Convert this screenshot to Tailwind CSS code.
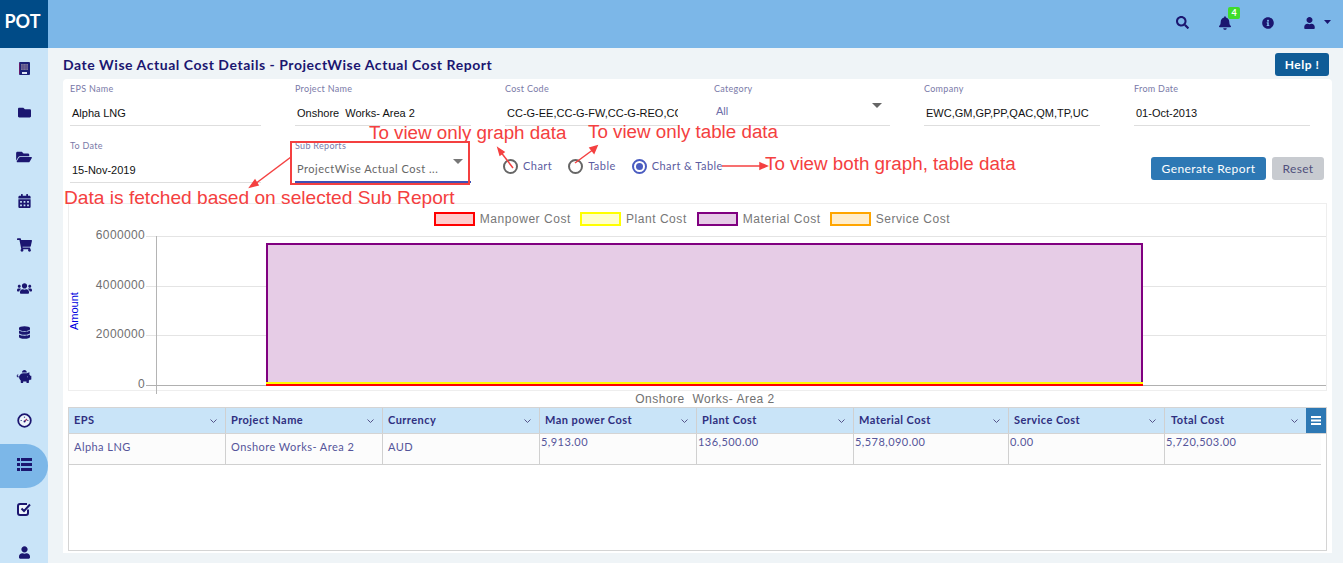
<!DOCTYPE html>
<html lang="en">
<head>
<meta charset="utf-8">
<title>Date Wise Actual Cost Details</title>
<script src="https://cdn.jsdelivr.net/npm/@tailwindcss/browser@4"></script>
</head>
<body class="m-0 overflow-hidden">
<div class="relative flex h-[563px] w-[1343px] overflow-hidden bg-[#eff4f7] font-['Lato',sans-serif]">
  <!-- Sidebar -->
  <aside class="flex h-full w-[48px] shrink-0 flex-col bg-[#c9e4f8] text-[#1b1670]">
    <div class="flex h-[48px] shrink-0 items-center justify-center bg-[#004b87] pb-[5px] pr-[3px] text-[18px] font-bold text-white">POT</div>
    <nav class="flex flex-col">
      <div class="flex h-[44px] items-center justify-center pb-[3px]">
        <svg class="h-[13px] w-[11px]" viewBox="0 0 11 13"><rect width="11" height="13" rx="1" fill="#1b2278"/><path d="M0 1h1v11H0z" fill="#6a1a6a"/><path d="M2 2h7v6H2z" fill="#76769a"/><path d="M2 4h7M2 6h7M4 2v6M7 2v6" stroke="#4a3a80" stroke-width=".6"/><path d="M3 10h5v2H3z" fill="#dfe6f5"/></svg>
      </div>
      <div class="flex h-[44px] items-center justify-center pb-[3px]"><svg class="h-[13px] w-[13px]" viewBox="0 0 512 512" fill="currentColor"><path d="M464 128H272l-64-64H48C21.49 64 0 85.49 0 112v288c0 26.51 21.49 48 48 48h416c26.51 0 48-21.49 48-48V176c0-26.51-21.49-48-48-48z"/></svg></div>
      <div class="flex h-[44px] items-center justify-center pb-[3px]"><svg class="h-[14px] w-[18px]" viewBox="0 0 576 512" fill="currentColor"><path d="M572.694 292.093L500.27 416.248A63.997 63.997 0 0 1 444.989 448H45.025c-18.523 0-30.064-20.093-20.731-36.093l72.424-124.155A64 64 0 0 1 152 256h399.964c18.523 0 30.064 20.093 20.73 36.093zM152 224h328v-48c0-26.51-21.49-48-48-48H272l-64-64H48C21.49 64 0 85.49 0 112v278.046l69.077-118.418C86.214 242.25 117.989 224 152 224z"/></svg></div>
      <div class="flex h-[44px] items-center justify-center pb-[3px]"><svg class="h-[14px] w-[13px]" viewBox="0 0 448 512" fill="currentColor"><path d="M0 464c0 26.5 21.5 48 48 48h352c26.5 0 48-21.5 48-48V192H0v272zm320-196c0-6.6 5.4-12 12-12h40c6.6 0 12 5.4 12 12v40c0 6.6-5.4 12-12 12h-40c-6.6 0-12-5.4-12-12v-40zm0 128c0-6.6 5.4-12 12-12h40c6.6 0 12 5.4 12 12v40c0 6.6-5.4 12-12 12h-40c-6.6 0-12-5.4-12-12v-40zM192 268c0-6.6 5.4-12 12-12h40c6.6 0 12 5.4 12 12v40c0 6.6-5.4 12-12 12h-40c-6.6 0-12-5.4-12-12v-40zm0 128c0-6.6 5.4-12 12-12h40c6.6 0 12 5.4 12 12v40c0 6.6-5.4 12-12 12h-40c-6.6 0-12-5.4-12-12v-40zM64 268c0-6.6 5.4-12 12-12h40c6.6 0 12 5.4 12 12v40c0 6.6-5.4 12-12 12H76c-6.6 0-12-5.4-12-12v-40zm0 128c0-6.6 5.4-12 12-12h40c6.6 0 12 5.4 12 12v40c0 6.6-5.4 12-12 12H76c-6.6 0-12-5.4-12-12v-40zM400 64h-48V16c0-8.8-7.2-16-16-16h-32c-8.8 0-16 7.2-16 16v48H160V16c0-8.8-7.2-16-16-16h-32c-8.8 0-16 7.2-16 16v48H48C21.5 64 0 85.5 0 112v48h448v-48c0-26.5-21.5-48-48-48z"/></svg></div>
      <div class="flex h-[44px] items-center justify-center pb-[3px]"><svg class="h-[14px] w-[15px]" viewBox="0 0 576 512" fill="currentColor"><path d="M528.12 301.319l47.273-208C578.806 78.301 567.391 64 551.99 64H159.208l-9.166-44.81C147.758 8.021 137.93 0 126.529 0H24C10.745 0 0 10.745 0 24v16c0 13.255 10.745 24 24 24h69.883l70.248 343.435C147.325 417.1 136 435.222 136 456c0 30.928 25.072 56 56 56s56-25.072 56-56c0-15.674-6.447-29.835-16.824-40h209.647C430.447 426.165 424 440.326 424 456c0 30.928 25.072 56 56 56s56-25.072 56-56c0-22.172-12.888-41.332-31.579-50.405l5.517-24.276c3.413-15.018-8.002-29.319-23.403-29.319H218.117l-6.545-32h293.145c11.206 0 20.92-7.754 23.403-18.681z"/></svg></div>
      <div class="flex h-[44px] items-center justify-center pb-[3px]"><svg class="h-[13px] w-[15px]" viewBox="0 0 640 512" fill="currentColor"><path d="M96 224c35.3 0 64-28.7 64-64s-28.7-64-64-64-64 28.7-64 64 28.7 64 64 64zm448 0c35.3 0 64-28.7 64-64s-28.7-64-64-64-64 28.7-64 64 28.7 64 64 64zm32 32h-64c-17.6 0-33.5 7.1-45.1 18.6 40.3 22.1 68.9 62 75.1 109.4h66c17.7 0 32-14.3 32-32v-32c0-35.3-28.7-64-64-64zm-256 0c61.9 0 112-50.1 112-112S381.9 32 320 32 208 82.1 208 144s50.1 112 112 112zm76.8 32h-8.3c-20.8 10-43.9 16-68.5 16s-47.6-6-68.5-16h-8.3C179.6 288 128 339.6 128 403.2V432c0 26.5 21.5 48 48 48h288c26.5 0 48-21.5 48-48v-28.8c0-63.6-51.6-115.2-115.2-115.2zm-223.7-13.4C161.5 263.1 145.6 256 128 256H64c-35.3 0-64 28.7-64 64v32c0 17.7 14.3 32 32 32h65.9c6.3-47.4 34.9-87.3 75.2-109.4z"/></svg></div>
      <div class="flex h-[44px] items-center justify-center pb-[3px]"><svg class="h-[13px] w-[11px]" viewBox="0 0 448 512" fill="currentColor"><path d="M448 73.143v45.714C448 159.143 347.667 192 224 192S0 159.143 0 118.857V73.143C0 32.857 100.333 0 224 0s224 32.857 224 73.143zM448 176v102.857C448 319.143 347.667 352 224 352S0 319.143 0 278.857V176c48.125 33.143 136.208 48.572 224 48.572S399.874 209.143 448 176zm0 160v102.857C448 479.143 347.667 512 224 512S0 479.143 0 438.857V336c48.125 33.143 136.208 48.572 224 48.572S399.874 369.143 448 336z"/></svg></div>
      <div class="flex h-[44px] items-center justify-center pb-[3px]"><svg class="h-[13px] w-[16px]" viewBox="0 0 576 512" fill="currentColor"><path d="M560 224h-29.5c-8.8-20-21.6-37.7-37.4-52.5L512 96h-32c-29.4 0-55.4 13.5-73 34.3-7.6-1.1-15.1-2.3-23-2.3H256c-77.4 0-141.9 55-156.8 128H56c-14.8 0-26.5-13.5-23.5-28.8C34.7 215.8 45.4 208 57 208h1c3.3 0 6-2.7 6-6v-20c0-3.3-2.7-6-6-6-28.5 0-53.9 20.4-57.5 48.6C-3.9 258.8 22.7 288 56 288h40c0 52.2 25.4 98.1 64 127.3V496c0 8.8 7.2 16 16 16h64c8.8 0 16-7.2 16-16v-48h128v48c0 8.8 7.2 16 16 16h64c8.8 0 16-7.2 16-16v-80.7c11.8-8.9 22.3-19.4 31.3-31.3H560c8.8 0 16-7.2 16-16V240c0-8.8-7.2-16-16-16zm-128 64c-8.8 0-16-7.2-16-16s7.2-16 16-16 16 7.2 16 16-7.2 16-16 16zM256 96h128c5.4 0 10.7.4 15.9.8 0-.3.1-.5.1-.8 0-53-43-96-96-96s-96 43-96 96c0 2.1.5 4.1.6 6.2 15.2-3.9 31-6.2 47.4-6.2z"/></svg></div>
      <div class="flex h-[44px] items-center justify-center pb-[3px]"><svg class="h-[15px] w-[15px]" viewBox="0 0 15 15" fill="none"><circle cx="7.500" cy="7.500" r="6.300" fill="#eef5fb" stroke="#1b1670" stroke-width="1.800"/><path d="M7.500 8.500 10 6" stroke="#a03060" stroke-width="1.200"/><path d="M3.500 7.500h1.500M7.500 3.500v1.500M10 7.500h1.500" stroke="#5a6aa0" stroke-width="1.200"/><circle cx="7.500" cy="8.500" r="1" fill="#1b1670"/></svg></div>
      <div class="flex h-[44px] items-center justify-center rounded-r-[22px] bg-[#7cb7e8] pb-[3px]"><svg class="h-[13px] w-[15px]" viewBox="0 0 15 13" fill="currentColor"><path d="M0 0h3v3H0zM4 0h11v3H4zM0 5h3v3H0zM4 5h11v3H4zM0 10h3v3H0zM4 10h11v3H4z"/></svg></div>
      <div class="flex h-[44px] items-center justify-center pb-[3px]"><svg class="h-[14px] w-[15px]" viewBox="0 0 15 14" fill="none" stroke="currentColor" stroke-width="2"><path d="M11 7.500V11a2 2 0 0 1-2 2H3a2 2 0 0 1-2-2V4a2 2 0 0 1 2-2h7" fill="#eef5fb"/><path d="M4.500 6.500 7 9l6-6.500"/></svg></div>
      <div class="flex h-[44px] items-center justify-center pb-[3px]"><svg class="h-[13px] w-[11px]" viewBox="0 0 448 512" fill="currentColor"><path d="M224 256c70.7 0 128-57.3 128-128S294.7 0 224 0 96 57.3 96 128s57.3 128 128 128zm89.6 32h-16.7c-22.2 10.2-46.9 16-72.9 16s-50.6-5.8-72.9-16h-16.7C60.2 288 0 348.2 0 422.4V464c0 26.5 21.5 48 48 48h352c26.5 0 48-21.5 48-48v-41.6c0-74.2-60.2-134.4-134.4-134.4z"/></svg></div>
    </nav>
  </aside>

  <div class="flex min-w-0 flex-1 flex-col">
    <!-- Header -->
    <header class="flex h-[48px] shrink-0 items-center justify-end bg-[#7cb7e8] text-[#1b1670]">
      <svg class="mr-[30px] mt-[-3px] h-[13px] w-[13px]" viewBox="0 0 512 512" fill="currentColor"><path d="M505 442.7L405.3 343c-4.5-4.5-10.6-7-17-7H372c27.6-35.3 44-79.7 44-128C416 93.1 322.9 0 208 0S0 93.1 0 208s93.1 208 208 208c48.3 0 92.7-16.4 128-44v16.3c0 6.4 2.5 12.5 7 17l99.7 99.7c9.4 9.4 24.6 9.4 33.9 0l28.3-28.3c9.4-9.4 9.4-24.6.1-34zM208 336c-70.7 0-128-57.2-128-128 0-70.7 57.2-128 128-128 70.7 0 128 57.2 128 128 0 70.7-57.2 128-128 128z"/></svg>
      <div class="relative mr-[31px] mt-[-3px]">
        <svg class="block h-[14px] w-[12px]" viewBox="0 0 448 512" fill="currentColor"><path d="M224 512c35.32 0 63.97-28.65 63.97-64H160.03c0 35.35 28.65 64 63.97 64zm215.39-149.71c-19.32-20.76-55.47-51.99-55.47-154.29 0-77.7-54.48-139.9-127.94-155.16V32c0-17.67-14.32-32-31.98-32s-31.98 14.33-31.98 32v20.84C118.56 68.1 64.08 130.3 64.08 208c0 102.3-36.15 133.53-55.47 154.29-6 6.45-8.66 14.16-8.61 21.71.11 16.4 12.98 32 32.1 32h383.8c19.12 0 32-15.6 32.1-32 .05-7.55-2.61-15.27-8.61-21.71z"/></svg>
        <span class="absolute left-[9px] top-[-9px] flex h-[12px] w-[12px] items-center justify-center rounded-[2px] bg-[#3fdc2c] text-[9px] font-bold leading-none text-white">4</span>
      </div>
      <svg class="mr-[30px] mt-[-3px] h-[12px] w-[12px]" viewBox="0 0 512 512" fill="currentColor"><path d="M256 8C119.043 8 8 119.083 8 256c0 136.997 111.043 248 248 248s248-111.003 248-248C504 119.083 392.957 8 256 8zm0 110c23.196 0 42 18.804 42 42s-18.804 42-42 42-42-18.804-42-42 18.804-42 42-42zm56 254c0 6.627-5.373 12-12 12h-88c-6.627 0-12-5.373-12-12v-24c0-6.627 5.373-12 12-12h12v-64h-12c-6.627 0-12-5.373-12-12v-24c0-6.627 5.373-12 12-12h64c6.627 0 12 5.373 12 12v100h12c6.627 0 12 5.373 12 12v24z"/></svg>
      <svg class="mr-[9px] mt-[-3px] h-[12px] w-[11px]" viewBox="0 0 448 512" fill="currentColor"><path d="M224 256c70.7 0 128-57.3 128-128S294.7 0 224 0 96 57.3 96 128s57.3 128 128 128zm89.6 32h-16.7c-22.2 10.2-46.9 16-72.9 16s-50.6-5.8-72.9-16h-16.7C60.2 288 0 348.2 0 422.4V464c0 26.5 21.5 48 48 48h352c26.5 0 48-21.5 48-48v-41.6c0-74.2-60.2-134.4-134.4-134.4z"/></svg>
      <svg class="mr-[12px] mt-[-4px] h-[4px] w-[7px]" viewBox="0 0 7 4" fill="currentColor"><path d="M0 0h7L3.500 4z"/></svg>
    </header>

    <main class="flex min-h-0 flex-1 flex-col pl-[15px] pr-[11px]">
      <div class="flex h-[31px] shrink-0 items-center justify-between pt-[1px]">
        <h1 class="text-[14px] font-bold tracking-[0.54px] text-[#1b1670]">Date Wise Actual Cost Details - ProjectWise Actual Cost Report</h1>
        <button class="mt-[1px] mr-[3px] h-[23px] w-[54px] rounded-[3px] bg-[#0f5c97] text-[12px] font-bold tracking-[0.5px] text-white">Help !</button>
      </div>

      <section class="h-[474px] shrink-0 rounded-t-[4px] bg-white pl-[5px] pr-[5px]">
        <!-- Form -->
        <div class="grid h-[124px] grid-cols-[191px_176px_175px_176px_176px_176px] grid-rows-[57px_57px] gap-x-[34px] pl-[2px] pt-[3px]">
          <div class="flex h-[44px] flex-col border-b border-[#dedede]"><span class="h-[14px] text-[9px] leading-[14px] tracking-[0.3px] text-[#7a7aa8]">EPS Name</span><span class="pl-[2px] pt-[10px] font-['Liberation_Sans',sans-serif] text-[11px] leading-[14px] text-[#111]">Alpha LNG</span></div>
          <div class="flex h-[44px] flex-col border-b border-[#dedede]"><span class="h-[14px] text-[9px] leading-[14px] tracking-[0.3px] text-[#7a7aa8]">Project Name</span><span class="whitespace-pre pl-[2px] pt-[10px] font-['Liberation_Sans',sans-serif] text-[11px] leading-[14px] text-[#111]">Onshore  Works- Area 2</span></div>
          <div class="flex h-[44px] flex-col border-b border-[#dedede]"><span class="h-[14px] text-[9px] leading-[14px] tracking-[0.3px] text-[#7a7aa8]">Cost Code</span><span class="w-[173px] overflow-hidden whitespace-nowrap pl-[2px] pt-[10px] font-['Liberation_Sans',sans-serif] text-[11px] leading-[14px] text-[#111]">CC-G-EE,CC-G-FW,CC-G-REO,CC-G-SW</span></div>
          <div class="relative flex h-[44px] flex-col border-b border-[#dedede]"><span class="h-[14px] text-[9px] leading-[14px] tracking-[0.3px] text-[#7a7aa8]">Category</span><span class="pl-[2px] pt-[8px] font-['Liberation_Sans',sans-serif] text-[11px] leading-[14px] text-[#6e6ea8]">All</span><i class="absolute right-[8px] top-[21px] h-0 w-0 border-x-[5px] border-t-[5px] border-x-transparent border-t-[#666]"></i></div>
          <div class="flex h-[44px] flex-col border-b border-[#dedede]"><span class="h-[14px] text-[9px] leading-[14px] tracking-[0.3px] text-[#7a7aa8]">Company</span><span class="pl-[2px] pt-[10px] font-['Liberation_Sans',sans-serif] text-[11px] leading-[14px] text-[#111]">EWC,GM,GP,PP,QAC,QM,TP,UC</span></div>
          <div class="flex h-[44px] flex-col border-b border-[#dedede]"><span class="h-[14px] text-[9px] leading-[14px] tracking-[0.3px] text-[#7a7aa8]">From Date</span><span class="pl-[2px] pt-[10px] font-['Liberation_Sans',sans-serif] text-[11px] leading-[14px] text-[#111]">01-Oct-2013</span></div>

          <div class="flex h-[44px] flex-col border-b border-[#dedede]"><span class="h-[14px] text-[9px] leading-[14px] tracking-[0.3px] text-[#7a7aa8]">To Date</span><span class="pl-[2px] pt-[10px] font-['Liberation_Sans',sans-serif] text-[11px] leading-[14px] text-[#111]">15-Nov-2019</span></div>
          <div class="relative flex h-[44px] w-[176px] flex-col border-b-2 border-[#3f51b5]"><span class="h-[14px] text-[9px] leading-[14px] tracking-[0.3px] text-[#7a7aa8]">Sub Reports</span><span class="pl-[2px] pt-[9px] text-[11px] leading-[14px] tracking-[0.52px] text-[#666]">ProjectWise Actual Cost ...</span><i class="absolute right-[8px] top-[20px] h-0 w-0 border-x-[5px] border-t-[5px] border-x-transparent border-t-[#777]"></i></div>
          <div class="col-span-4 flex items-start justify-between">
            <div class="-ml-[2px] flex items-center pt-[20px] text-[11px] tracking-[0.45px] text-[#5c5ca0]">
              <span class="mr-[5px] h-[15px] w-[15px] rounded-full border-2 border-[#666]"></span><span class="mr-[16px] mt-[-1px]">Chart</span>
              <span class="mr-[5px] h-[15px] w-[15px] rounded-full border-2 border-[#666]"></span><span class="mr-[16px] mt-[-1px]">Table</span>
              <span class="mr-[5px] flex h-[15px] w-[15px] items-center justify-center rounded-full border-2 border-[#4a5cc0]"><span class="h-[7px] w-[7px] rounded-full bg-[#4a5cc0]"></span></span><span class="mt-[-1px]">Chart &amp; Table</span>
            </div>
            <div class="mr-[-14px] flex gap-[6px] pt-[18px]">
              <button class="h-[23px] w-[115px] rounded-[3px] bg-[#2d78b4] text-[12px] tracking-[0.42px] text-white">Generate Report</button>
              <button class="h-[23px] w-[52px] rounded-[3px] bg-[#c8cbd0] text-[12px] tracking-[0.3px] text-[#50507c]">Reset</button>
            </div>
          </div>
        </div>

        <!-- Chart -->
        <div class="h-[188px] w-[1259px] border border-[#eeeeee] font-['Liberation_Sans',sans-serif]">
          <div class="flex h-[31px] items-start justify-center gap-[9px] pr-[11px] pt-[8px] text-[12px] leading-[14px] tracking-[0.55px] text-[#777]">
            <span class="flex items-center gap-[5px]"><i class="h-[14px] w-[41px] border-2 border-[#ff0000] bg-[#ffcccc]"></i>Manpower Cost</span>
            <span class="mr-[1px] flex items-center gap-[5px]"><i class="h-[14px] w-[41px] border-2 border-[#ffff00] bg-[#ffffcc]"></i>Plant Cost</span>
            <span class="flex items-center gap-[5px]"><i class="h-[14px] w-[41px] border-2 border-[#800080] bg-[#e6cce6]"></i>Material Cost</span>
            <span class="flex items-center gap-[5px]"><i class="h-[14px] w-[41px] border-2 border-[#ffa500] bg-[#ffedcc]"></i>Service Cost</span>
          </div>
          <svg class="block overflow-visible" width="1257" height="155" viewBox="0 0 1257 155">
            <g stroke="#e4e4e4"><path d="M77 1.500H1257M77 51.500H1257M77 100.500H1257"/></g>
            <path d="M87.500 1V159" stroke="#b4b4b4"/>
            <rect x="198" y="9" width="875" height="141" fill="#e6cce6" stroke="#800080" stroke-width="2"/>
            <path d="M77 150.500H1257" stroke="#b0b0b0"/>
            <path d="M197 148H1074" stroke="#ffff00" stroke-width="2"/>
            <path d="M197 150H1074" stroke="#ff0000" stroke-width="2"/>
            <g fill="#707070" font-size="12" letter-spacing="0.35" text-anchor="end">
              <text x="76" y="4">6000000</text>
              <text x="76" y="54">4000000</text>
              <text x="76" y="103">2000000</text>
              <text x="76" y="153">0</text>
            </g>
            <text transform="translate(9 95) rotate(-90)" fill="#0000e0" font-size="11">Amount</text>
            <text class="whitespace-pre" x="636" y="168" fill="#707070" font-size="12" letter-spacing="0.5" text-anchor="middle">Onshore  Works- Area 2</text>
          </svg>
        </div>

        <!-- Table -->
        <div class="mt-[16px] h-[144px] w-[1259px] border border-[#d4d4d4] text-[11px] tracking-[0.45px]">
          <div class="flex h-[26px] border-b border-[#d4d4d4] bg-[#c9e4f8] font-bold text-[#2f2f80]">
            <div class="flex w-[157px] items-center justify-between border-r border-[#d0d0d0] pl-[5px] pr-[8px]">EPS<svg class="h-[4px] w-[7px]" viewBox="0 0 7 4" fill="none" stroke="#55558a"><path d="M.5.5l3 3 3-3"/></svg></div>
            <div class="flex w-[157px] items-center justify-between border-r border-[#d0d0d0] pl-[5px] pr-[8px]">Project Name<svg class="h-[4px] w-[7px]" viewBox="0 0 7 4" fill="none" stroke="#55558a"><path d="M.5.5l3 3 3-3"/></svg></div>
            <div class="flex w-[157px] items-center justify-between border-r border-[#d0d0d0] pl-[5px] pr-[8px]">Currency<svg class="h-[4px] w-[7px]" viewBox="0 0 7 4" fill="none" stroke="#55558a"><path d="M.5.5l3 3 3-3"/></svg></div>
            <div class="flex w-[157px] items-center justify-between border-r border-[#d0d0d0] pl-[5px] pr-[8px]">Man power Cost<svg class="h-[4px] w-[7px]" viewBox="0 0 7 4" fill="none" stroke="#55558a"><path d="M.5.5l3 3 3-3"/></svg></div>
            <div class="flex w-[157px] items-center justify-between border-r border-[#d0d0d0] pl-[5px] pr-[8px]">Plant Cost<svg class="h-[4px] w-[7px]" viewBox="0 0 7 4" fill="none" stroke="#55558a"><path d="M.5.5l3 3 3-3"/></svg></div>
            <div class="flex w-[155px] items-center justify-between border-r border-[#d0d0d0] pl-[5px] pr-[8px]">Material Cost<svg class="h-[4px] w-[7px]" viewBox="0 0 7 4" fill="none" stroke="#55558a"><path d="M.5.5l3 3 3-3"/></svg></div>
            <div class="flex w-[156px] items-center justify-between border-r border-[#d0d0d0] pl-[5px] pr-[8px]">Service Cost<svg class="h-[4px] w-[7px]" viewBox="0 0 7 4" fill="none" stroke="#55558a"><path d="M.5.5l3 3 3-3"/></svg></div>
            <div class="flex w-[141px] items-center justify-between pl-[6px] pr-[8px]">Total Cost<svg class="h-[4px] w-[7px]" viewBox="0 0 7 4" fill="none" stroke="#55558a"><path d="M.5.5l3 3 3-3"/></svg></div>
            <div class="flex flex-1 items-center justify-center bg-[#2d78b4]"><svg class="h-[9px] w-[10px]" viewBox="0 0 10 9" fill="#fff"><path d="M0 0h10v2H0zM0 3.500h10v2H0zM0 7h10v2H0z"/></svg></div>
          </div>
          <div class="flex h-[31px] w-[1252px] border-b border-[#d0d0d0] bg-[#fcfcfc] text-[#55559a]">
            <div class="flex w-[157px] items-center border-r border-[#d0d0d0] pb-[4px] pl-[5px]">Alpha LNG</div>
            <div class="flex w-[157px] items-center border-r border-[#d0d0d0] pb-[4px] pl-[5px]">Onshore Works- Area 2</div>
            <div class="flex w-[157px] items-center border-r border-[#d0d0d0] pb-[4px] pl-[5px]">AUD</div>
            <div class="w-[157px] border-r border-[#d0d0d0] pl-[1px]">5,913.00</div>
            <div class="w-[157px] border-r border-[#d0d0d0] pl-[1px]">136,500.00</div>
            <div class="w-[155px] border-r border-[#d0d0d0] pl-[1px]">5,578,090.00</div>
            <div class="w-[156px] border-r border-[#d0d0d0] pl-[1px]">0.00</div>
            <div class="flex-1 pl-[1px]">5,720,503.00</div>
          </div>
        </div>
      </section>
    </main>
  </div>

  <!-- Annotations drawn over the screenshot -->
  <div class="pointer-events-none absolute inset-0 font-['Liberation_Sans',sans-serif] text-[18.8px] leading-[21px] text-[#f44040]">
    <div class="absolute left-[290px] top-[141px] h-[44px] w-[180px] border-2 border-[#f44040]"></div>
    <span class="absolute left-[369px] top-[122px] whitespace-nowrap">To view only graph data</span>
    <span class="absolute left-[588px] top-[121px] whitespace-nowrap">To view only table data</span>
    <span class="absolute left-[765px] top-[153px] whitespace-nowrap">To view both graph, table data</span>
    <span class="absolute left-[64px] top-[187px] whitespace-nowrap text-[19.15px]">Data is fetched based on selected Sub Report</span>
    <svg class="absolute left-0 top-0" width="1343" height="563" fill="none" stroke="#f44040" stroke-width="1.5">
      <path d="M291 157 255 184"/><path d="M250 187l8-2-3-5z" fill="#f44040"/>
      <path d="M513 168 500 151"/><path d="M498 148l6 4-4 3z" fill="#f44040"/>
      <path d="M575 163 594 149"/><path d="M597 146l-3 7-4-5z" fill="#f44040"/>
      <path d="M722 166H762"/><path d="M767 166l-7-3v6z" fill="#f44040"/>
    </svg>
  </div>
</div>
</body>
</html>
